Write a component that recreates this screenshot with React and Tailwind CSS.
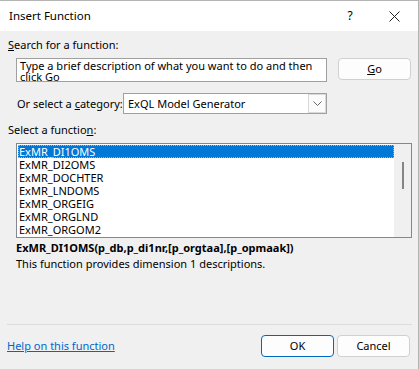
import React from "react";

const items = [
  "ExMR_DI1OMS",
  "ExMR_DI2OMS",
  "ExMR_DOCHTER",
  "ExMR_LNDOMS",
  "ExMR_ORGEIG",
  "ExMR_ORGLND",
  "ExMR_ORGOM2",
];

function Btn({ children, primary }) {
  return (
    <button
      className={
        "h-[22px] w-[73px] rounded-[4px] bg-[#fdfdfd] text-[11px] leading-[20px] text-black flex items-center justify-center shrink-0 " +
        (primary ? "border border-[#0067c0]" : "border border-[#d0d0d0]")
      }
    >
      {children}
    </button>
  );
}

export default function App() {
  return (
    <div
      className="w-[419px] h-[369px] overflow-hidden bg-[#f0f0f0] border-t border-r border-[#b4b4b4] text-[11px] leading-[16px] text-black flex flex-col whitespace-nowrap"
      style={{ fontFamily: '"Noto Sans", "Segoe UI", sans-serif' }}
    >
      <div className="h-[30px] bg-white flex items-center pl-[9px] shrink-0">
        <span className="text-[11.5px] flex-1">Insert Function</span>
        <span className="w-[10px] text-center mr-[34px] text-[12px]">?</span>
        <svg width="11" height="11" viewBox="0 0 11 11" className="mr-[18px]">
          <path d="M0.5 0.5 L10.5 10.5 M10.5 0.5 L0.5 10.5" stroke="#222" strokeWidth="1" fill="none" />
        </svg>
      </div>

      <div className="flex flex-col pl-[8px]">
        <div className="mt-[6px] h-[16px]">
          <span className="underline">S</span>earch for a function:
        </div>

        <div className="flex mt-[5px] ml-[8px]">
          <div className="w-[311px] h-[24px] bg-white border border-[#a0a0a0] pl-[3px] pt-[1px] leading-[11px] overflow-hidden whitespace-normal">
            Type a brief description of what you want to do and then click Go
          </div>
          <div className="ml-[11px]">
            <Btn>
              <span className="underline">G</span>o
            </Btn>
          </div>
        </div>

        <div className="flex items-center mt-[11px] ml-[9px]">
          <span className="w-[106px]">
            Or select a <span className="underline">c</span>ategory:
          </span>
          <div className="w-[204px] h-[21px] bg-white border border-[#a0a0a0] flex items-center">
            <span className="flex-1 pl-[4px]">ExQL Model Generator</span>
            <div className="w-[18px] h-full border border-[#d9d9d9] bg-[#fbfbfb] flex items-center justify-center">
              <svg width="9" height="5" viewBox="0 0 9 5">
                <path d="M0.5 0.5 L4.5 4.5 L8.5 0.5" stroke="#666" strokeWidth="1" fill="none" />
              </svg>
            </div>
          </div>
        </div>

        <div className="mt-[8px] h-[16px]">
          Select a functio<span className="underline">n</span>:
        </div>

        <div className="mt-[5px] ml-[8px] w-[396px] h-[95px] border border-[#828790] bg-white flex">
          <div className="flex-1 pt-[1px] pl-[1px]">
            {items.map((t, i) => (
              <div
                key={t}
                className={
                  "h-[13px] leading-[13px] pl-[1px] " +
                  (i === 0 ? "bg-[#0078d7] text-white outline outline-1 outline-dotted outline-[#f6a33a] -outline-offset-1" : "")
                }
              >
                {t}
              </div>
            ))}
          </div>
          <div className="w-[17px] bg-[#f0f0f0] flex justify-center pt-[18px]">
            <div className="w-[2px] h-[27px] bg-[#858585]" />
          </div>
        </div>

        <div className="mt-[2px] ml-[8px] font-bold h-[16px]">
          ExMR_DI1OMS(p_db,p_di1nr,[p_orgtaa],[p_opmaak])
        </div>
        <div className="ml-[8px] h-[16px]">
          This function provides dimension 1 descriptions.
        </div>

        <div className="mt-[52px] border-t border-[#dcdcdc] -ml-[1px] w-[405px]" />

        <div className="flex items-center mt-[10px] w-[402px]">
          <span className="flex-1 text-[#0066cc] underline -ml-[1px]">Help on this function</span>
          <Btn primary>OK</Btn>
          <div className="ml-[3px]">
            <Btn>Cancel</Btn>
          </div>
        </div>
      </div>
    </div>
  );
}
